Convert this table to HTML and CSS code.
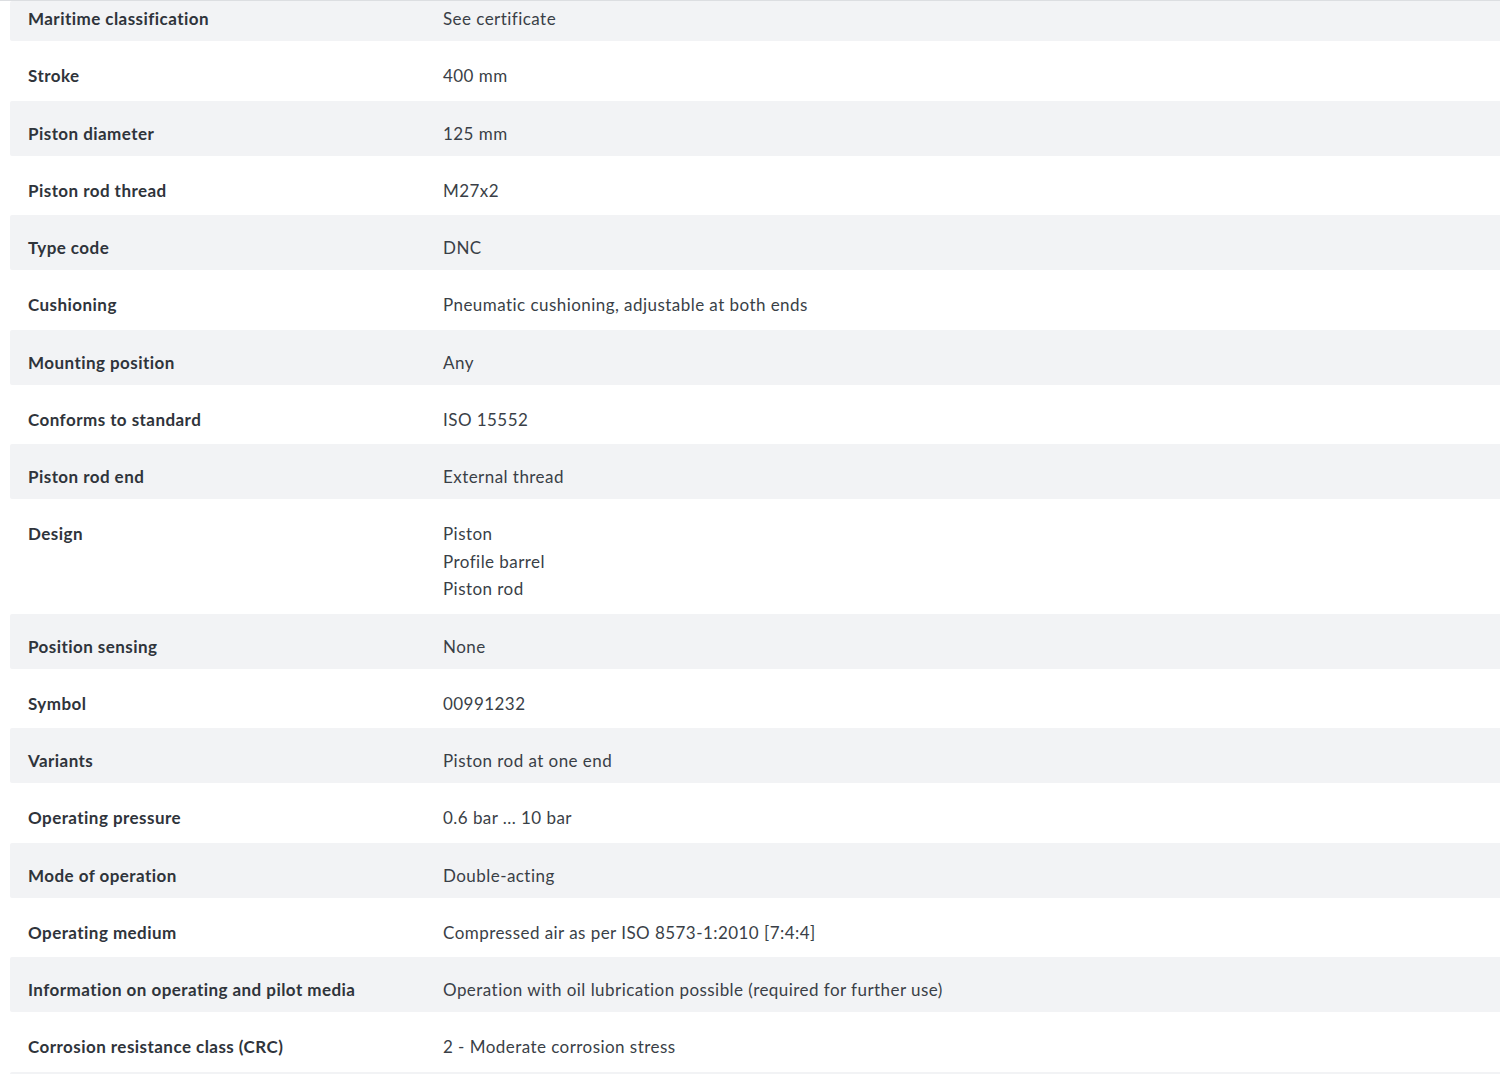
FILE: index.html
```html
<!DOCTYPE html>
<html lang="en">
<head>
<meta charset="utf-8">
<title>Technical data</title>
<link rel="stylesheet" href="styles.css">
</head>
<body>
<div class="topline"></div>
<div class="specs">
  <div class="row grey first"><div class="label">Maritime classification</div><div class="value">See certificate</div></div>
  <div class="row"><div class="label">Stroke</div><div class="value">400 mm</div></div>
  <div class="row grey"><div class="label">Piston diameter</div><div class="value">125 mm</div></div>
  <div class="row"><div class="label">Piston rod thread</div><div class="value">M27x2</div></div>
  <div class="row grey"><div class="label">Type code</div><div class="value">DNC</div></div>
  <div class="row"><div class="label">Cushioning</div><div class="value">Pneumatic cushioning, adjustable at both ends</div></div>
  <div class="row grey"><div class="label">Mounting position</div><div class="value">Any</div></div>
  <div class="row"><div class="label">Conforms to standard</div><div class="value">ISO 15552</div></div>
  <div class="row grey"><div class="label">Piston rod end</div><div class="value">External thread</div></div>
  <div class="row"><div class="label">Design</div><div class="value">Piston<br>Profile barrel<br>Piston rod</div></div>
  <div class="row grey"><div class="label">Position sensing</div><div class="value">None</div></div>
  <div class="row"><div class="label">Symbol</div><div class="value">00991232</div></div>
  <div class="row grey"><div class="label">Variants</div><div class="value">Piston rod at one end</div></div>
  <div class="row"><div class="label">Operating pressure</div><div class="value">0.6 bar ... 10 bar</div></div>
  <div class="row grey"><div class="label">Mode of operation</div><div class="value">Double-acting</div></div>
  <div class="row"><div class="label">Operating medium</div><div class="value">Compressed air as per ISO 8573-1:2010 [7:4:4]</div></div>
  <div class="row grey"><div class="label">Information on operating and pilot media</div><div class="value">Operation with oil lubrication possible (required for further use)</div></div>
  <div class="row"><div class="label">Corrosion resistance class (CRC)</div><div class="value">2 - Moderate corrosion stress</div></div>
  <div class="row grey"><div class="label"></div><div class="value"></div></div>
</div>
</body>
</html>
```
FILE: styles.css
```css
html, body {
  margin: 0;
  padding: 0;
  background: #ffffff;
}
body {
  font-family: Lato, "Noto Sans", sans-serif;
  color: #2f343b;
  font-size: 17px;
  letter-spacing: 0.45px;
  overflow: hidden;
  height: 1074px;
}
.topline {
  height: 1px;
  background: #dcdee1;
}
.specs {
  margin-left: 10px;
}
.row {
  display: grid;
  grid-template-columns: 433px 1fr;
  line-height: 27.5px;
  padding: 21px 0 11px 0;
}
.row.grey {
  background: #f2f3f5;
  padding: 19px 0 8.5px 0;
  border-radius: 2px 0 0 2px;
}
.row.first {
  padding-top: 4px;
}
.label {
  padding-left: 18px;
  font-weight: 700;
  color: #2f343b;
  min-height: 27.5px;
}
.value {
  font-weight: 400;
  color: #3a3f47;
}
```
